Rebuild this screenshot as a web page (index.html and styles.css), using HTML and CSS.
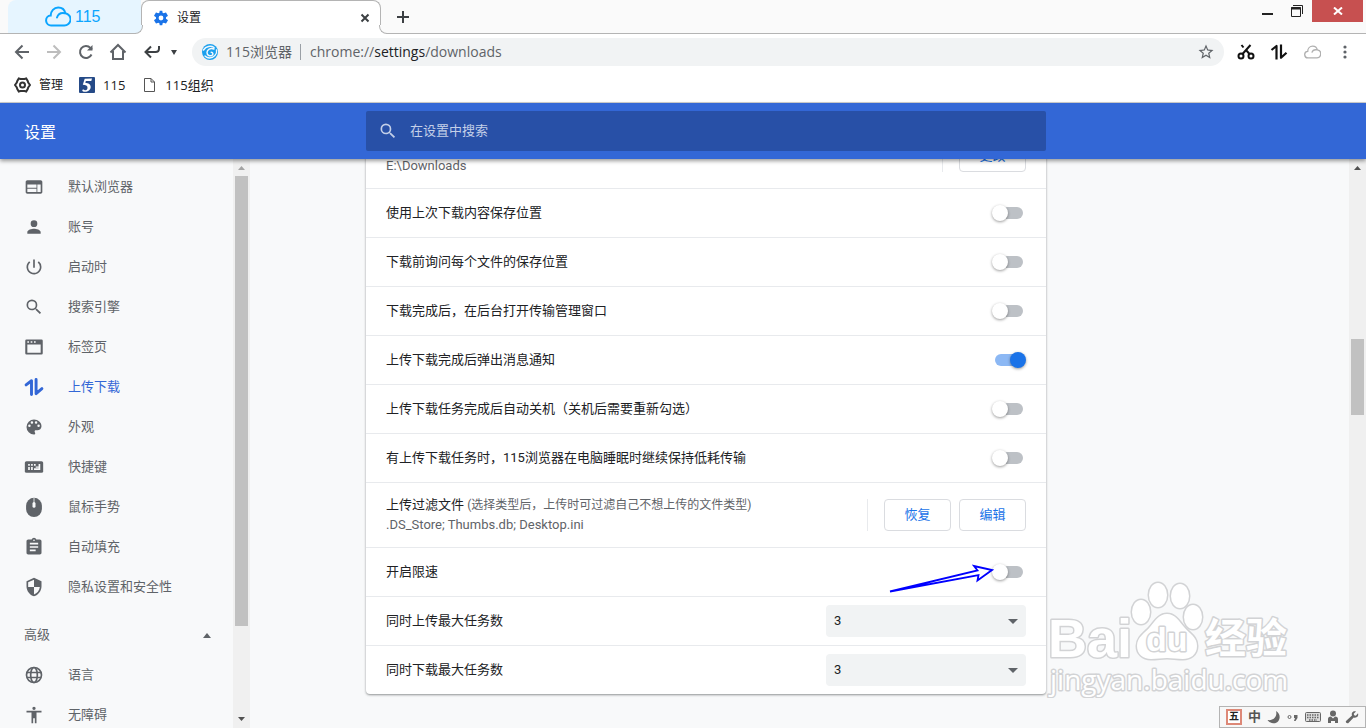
FILE: index.html
```html
<!DOCTYPE html>
<html lang="zh-CN">
<head>
    <meta charset="UTF-8">
    <meta name="viewport" content="width=device-width, initial-scale=1.0">
    <title>设置</title>
    <link rel="stylesheet" href="styles.css">
</head>
<body>
    <!-- Tabs -->
    <div class="tab-strip">
        <a class="home-tab" href="#">
            <svg width="26" height="21" viewBox="0 0 26 21" fill="none" stroke="#0ba5ff" stroke-width="2" stroke-linecap="round"><path d="M6.5 19.5a5 5 0 0 1-.8-10C5.700 5 9 1.500 13.200 1.500c3.600 0 6.400 2.400 7.200 5.700a6.200 6.200 0 0 1-1.400 12.300H6.500zM12 11.500c1-3 3.800-4.900 7.500-4.300"/></svg>
            <span>115</span>
        </a>
        <div class="tab">
            <svg width="16" height="16" viewBox="0 0 24 24" fill="#1a73e8"><path d="M19.430 12.980c.040-.320.070-.640.070-.980s-.030-.660-.070-.980l2.700-2.100c.200-.200.200-.400.100-.600l-2.500-4.300c-.100-.200-.400-.300-.600-.200l-3.100 1.200c-.500-.400-1-.700-1.700-1L14 1.400c0-.200-.300-.400-.500-.400h-3c-.200 0-.500.200-.500.400l-.400 2.600c-.600.300-1.200.600-1.700 1l-3.100-1.200c-.200-.100-.500 0-.600.200L1.700 8.300c-.100.200-.100.500.100.600l2.700 2.100a8 8 0 0 0 0 2l-2.700 2.100c-.200.100-.200.400-.100.600l2.500 4.300c.100.200.400.300.600.200L7.900 19c.500.400 1.100.700 1.700 1l.4 2.600c0 .2.300.4.500.4h3c.2 0 .5-.2.500-.4l.4-2.600c.6-.3 1.200-.6 1.700-1l3.100 1.200c.2.100.5 0 .6-.2l2.500-4.300c.1-.2.1-.5-.1-.6zM12 15.600a3.600 3.600 0 1 1 0-7.200 3.600 3.600 0 0 1 0 7.200z"/></svg>
            <span class="tab-title">设置</span>
            <button class="tab-close" aria-label="关闭标签页"><svg width="10" height="10" viewBox="0 0 10 10" stroke="#3c4043" stroke-width="2"><path d="M1.500 1.500l7 7M8.500 1.500l-7 7"/></svg></button>
        </div>
        <button class="new-tab" aria-label="新标签页"><svg width="12" height="12" viewBox="0 0 12 12" stroke="#3c4043" stroke-width="2"><path d="M6 0v12M0 6h12"/></svg></button>
        <div class="window-controls">
            <button class="win-btn" aria-label="最小化"><svg width="12" height="12" viewBox="0 0 12 12"><path d="M1 8h11v2H1z" fill="#222"/></svg></button>
            <button class="win-btn" aria-label="还原"><svg width="12" height="12" viewBox="0 0 12 12" fill="none" stroke="#222"><path d="M2 .5h9.500V9M.5 2.500h9v9h-9z"/><path d="M0 3.500h10" stroke-width="2"/></svg></button>
            <button class="win-btn win-close" aria-label="关闭"><svg width="10" height="8" viewBox="0 0 10 8" stroke="#fff" stroke-width="2"><path d="M1 .5l8 7M9 .5l-8 7"/></svg></button>
        </div>
    </div>

    <!-- Address bar -->
    <div class="toolbar">
        <button class="tool" aria-label="后退"><svg width="16" height="16" viewBox="0 0 16 16" fill="none" stroke="#5f6368" stroke-width="2"><path d="M15 8H2.500M8.500 1.500L2 8l6.500 6.500"/></svg></button>
        <button class="tool" aria-label="前进"><svg width="16" height="16" viewBox="0 0 16 16" fill="none" stroke="#bdbdbd" stroke-width="2"><path d="M1 8h12.500M7.500 1.500L14 8l-6.500 6.500"/></svg></button>
        <button class="tool" aria-label="重新加载"><svg width="16" height="16" viewBox="0 0 16 16" fill="none" stroke="#5f6368" stroke-width="2"><path d="M13.500 10.500A6 6 0 1 1 12.400 3.900L14 5.500"/><path d="M14.500 1v5.500H9z" fill="#5f6368" stroke="none"/></svg></button>
        <button class="tool" aria-label="主页"><svg width="18" height="18" viewBox="0 0 18 18" fill="none" stroke="#5f6368" stroke-width="2"><path d="M1.500 9.500L9 2l7.500 7.500M4 8v8h10V8"/></svg></button>
        <button class="tool tool-undo" aria-label="恢复"><svg width="18" height="16" viewBox="0 0 18 16" fill="none" stroke="#3c4043" stroke-width="2"><path d="M16 2v2.500c0 2-1.500 3.500-3.500 3.500H2.500M8 2.500L2.500 8 8 13.500"/></svg></button>
        <button class="tool tool-more" aria-label="更多"><svg width="6" height="5" viewBox="0 0 6 5"><path d="M0 0h6L3 5z" fill="#3c4043"/></svg></button>
        <div class="omnibox">
            <svg width="16" height="16" viewBox="0 0 16 16" fill="none"><circle cx="8" cy="8" r="8" fill="#1ba0ee"/><path d="M1.500 6C4 2 9 1.300 12 3.500M12 5C8.500 3.500 5 5.500 5 8.500s3 4 5 2.800c1.500-1 1-3-.8-3" stroke="#f1f8fd" stroke-width="1.500" stroke-linecap="round"/><path d="M14.500 6c1 4-3 8-7 8-2 0-3.500-1-4.500-2" stroke="#f1f8fd" stroke-width="1.300" stroke-linecap="round"/></svg>
            <span class="site-name">115浏览器</span>
            <span class="url">chrome://<b>settings</b>/downloads</span>
            <button class="star" aria-label="收藏"><svg width="18" height="18" viewBox="0 0 24 24" fill="#5f6368"><path d="M22 9.240l-7.190-.620L12 2 9.190 8.630 2 9.240l5.460 4.730L5.820 21 12 17.270 18.180 21l-1.630-7.030L22 9.240zM12 15.400l-3.760 2.270 1-4.280-3.320-2.880 4.380-.380L12 6.100l1.710 4.040 4.380.380-3.320 2.880 1 4.280L12 15.400z"/></svg></button>
        </div>
        <div class="actions">
            <button class="tool" aria-label="截图"><svg width="18" height="18" viewBox="0 0 18 18" fill="none" stroke="#111" stroke-width="2"><circle cx="4" cy="13" r="2.500"/><circle cx="14" cy="13" r="2.500"/><path d="M5.500 11L13.500 2M12.500 11L9 7M6.500 4.500L4.500 2"/></svg></button>
            <button class="tool" aria-label="传输"><svg width="18" height="16" viewBox="0 0 18 16" fill="none" stroke="#111" stroke-width="2.200" stroke-linejoin="round"><path d="M1.500 6L6.500 2v13.500M11 .5v13.300l5.500-5"/></svg></button>
            <button class="tool" aria-label="云"><svg width="17" height="14" viewBox="0 0 26 21" fill="none" stroke="#b0b0b0" stroke-width="2"><path d="M6.500 19.500a5 5 0 0 1-.8-10C5.700 5 9 1.500 13.200 1.500c3.600 0 6.400 2.400 7.200 5.700a6.200 6.200 0 0 1-1.400 12.300H6.500zM12 11.500c1-3 3.800-4.900 7.500-4.300"/></svg></button>
            <button class="tool" aria-label="菜单"><svg width="4" height="14" viewBox="0 0 4 14" fill="#5f6368"><circle cx="2" cy="2" r="1.600"/><circle cx="2" cy="7" r="1.600"/><circle cx="2" cy="12" r="1.600"/></svg></button>
        </div>
    </div>

    <!-- Bookmarks -->
    <div class="bookmarks">
        <a class="bookmark bookmark-manage" href="#">
            <svg width="17" height="16" viewBox="0 0 17 16" fill="none" stroke="#333" stroke-width="2"><path d="M4.800 1.500L6.500 2h4l1.700-.500 1.500 2.500.5 1.500L16 8l-1.800 2.500-.5 1.500-1.500 2.500-1.700-.500h-4l-1.700.500L3.300 12l-.5-1.500L1 8l1.800-2.500.5-1.500z"/><circle cx="8.500" cy="8" r="2.500"/></svg>
            <span>管理</span>
        </a>
        <a class="bookmark" href="#">
            <svg width="16" height="16" viewBox="0 0 16 16"><rect width="16" height="16" rx="1" fill="#254a87"/><path d="M13 1.500L12.300 4H6.800l-.4 2c3 0 5.300 1.200 5.300 4 0 3-2.800 4.800-5.700 4.800-1.500 0-2.700-.500-2.700-1.400 0-.8 1-1.200 1.700-.7 2 1.300 3.500.1 3.500-2 0-2.300-1.700-3-4.700-3L5.700 1.800z" fill="#fff"/></svg>
            <span>115</span>
        </a>
        <a class="bookmark" href="#">
            <svg width="16" height="14" viewBox="0 0 16 14" fill="none" stroke="#555"><path d="M3.500.5H10L13.500 4v9.500h-10zM10 .5V4h3.500"/></svg>
            <span>115组织</span>
        </a>
    </div>

    <header class="header">
        <h1>设置</h1>
        <label class="search">
            <svg width="20" height="20" viewBox="0 0 24 24" fill="#c3cfe8"><path d="M15.500 14h-.790l-.280-.270A6.470 6.470 0 0 0 16 9.500 6.500 6.500 0 1 0 9.500 16c1.610 0 3.090-.590 4.230-1.570l.270.280v.790l5 4.990L20.490 19l-4.990-5zm-6 0a4.500 4.500 0 1 1 0-9 4.500 4.500 0 0 1 0 9z"/></svg>
            <input type="text" placeholder="在设置中搜索" aria-label="在设置中搜索">
        </label>
    </header>

    <div class="page">
        <nav class="sidebar">
            <div class="menu">
                <a class="item" href="#"><svg viewBox="0 0 24 24"><path d="M20 4H4c-1.100 0-2 .9-2 2v12c0 1.100.9 2 2 2h16c1.100 0 2-.9 2-2V6c0-1.100-.9-2-2-2zm-5 14H4v-4h11v4zm0-5H4V9h11v4zm5 5h-4V9h4v9z"/></svg>默认浏览器</a>
                <a class="item" href="#"><svg viewBox="0 0 24 24"><path d="M12 12a4 4 0 1 0 0-8 4 4 0 0 0 0 8zm0 2c-2.670 0-8 1.340-8 4v2h16v-2c0-2.660-5.330-4-8-4z"/></svg>账号</a>
                <a class="item" href="#"><svg viewBox="0 0 24 24"><path d="M13 3h-2v10h2V3zm4.830 2.170l-1.420 1.420A6.920 6.920 0 0 1 19 12a7 7 0 1 1-11.420-5.420L6.170 5.170A9 9 0 1 0 21 12a8.900 8.900 0 0 0-3.170-6.830z"/></svg>启动时</a>
                <a class="item" href="#"><svg viewBox="0 0 24 24"><path d="M15.500 14h-.790l-.280-.270A6.470 6.470 0 0 0 16 9.500 6.500 6.500 0 1 0 9.500 16c1.610 0 3.090-.590 4.230-1.570l.270.280v.790l5 4.990L20.490 19l-4.990-5zm-6 0a4.500 4.500 0 1 1 0-9 4.500 4.500 0 0 1 0 9z"/></svg>搜索引擎</a>
                <a class="item" href="#"><svg viewBox="0 0 24 24"><path d="M3 3h18q1.500 0 1.500 1.500v15q0 1.500-1.500 1.500H3q-1.500 0-1.500-1.500v-15Q1.500 3 3 3zm1 6v10h16V9zm0-3.800v1.800h2V5.200zm4 0v1.800h2V5.200zm4 0v1.800h2V5.200z" fill-rule="evenodd"/></svg>标签页</a>
                <a class="item active" href="#"><svg viewBox="0 0 24 24"><path d="M2.500 9.500L9 4.500V21M14.500 3v17l7-6" fill="none" stroke="#3367d6" stroke-width="3.500" stroke-linecap="round" stroke-linejoin="round"/></svg>上传下载</a>
                <a class="item" href="#"><svg viewBox="0 0 24 24"><path d="M12 3a9 9 0 0 0 0 18c.830 0 1.500-.670 1.500-1.500 0-.390-.150-.740-.390-1.010-.230-.260-.380-.610-.380-.990 0-.830.670-1.500 1.500-1.500H16c2.760 0 5-2.240 5-5 0-4.420-4.030-8-9-8zm-5.500 9a1.500 1.500 0 1 1 0-3 1.500 1.500 0 0 1 0 3zm3-4a1.500 1.500 0 1 1 0-3 1.500 1.500 0 0 1 0 3zm5 0a1.500 1.500 0 1 1 0-3 1.500 1.500 0 0 1 0 3zm3 4a1.500 1.500 0 1 1 0-3 1.500 1.500 0 0 1 0 3z"/></svg>外观</a>
                <a class="item" href="#"><svg viewBox="0 0 24 24"><path d="M3 5h18q2 0 2 2v10q0 2-2 2H3q-2 0-2-2V7q0-2 2-2z"/><path d="M5 8.500h2v2H5zM8.500 8.500h2v2h-2zM12 8.500h2v2h-2zM5 12h2v3.500H5zM8.500 12h2v3.500h-2zM12 13.500h7.500v2H12zM17.500 8.500h2v6h-2zM14 11.500h3.500v1.500H14z" fill="#f8f9fa"/></svg>快捷键</a>
                <a class="item" href="#"><svg viewBox="0 0 24 24"><rect x="2.500" y="1" width="19" height="23" rx="9.500"/><path d="M12 1v6" stroke="#f8f9fa"/><rect x="10.200" y="6" width="3.600" height="7" rx="1.800" fill="#f8f9fa"/></svg>鼠标手势</a>
                <a class="item" href="#"><svg viewBox="0 0 24 24"><path d="M19 3h-4.180a3 3 0 0 0-5.640 0H5c-1.100 0-2 .9-2 2v14c0 1.100.9 2 2 2h14c1.100 0 2-.9 2-2V5c0-1.100-.9-2-2-2zm-7 0a1 1 0 1 1 0 2 1 1 0 0 1 0-2zm2 14H7v-2h7v2zm3-4H7v-2h10v2zm0-4H7V7h10v2z"/></svg>自动填充</a>
                <a class="item" href="#"><svg viewBox="0 0 24 24"><path d="M12 1L3 5v6c0 5.550 3.840 10.740 9 12 5.160-1.260 9-6.450 9-12V5l-9-4zm0 10.990h7c-.530 4.120-3.280 7.790-7 8.940V12H5V6.300l7-3.110v8.800z"/></svg>隐私设置和安全性</a>
                <button class="advanced">高级<svg width="8" height="5" viewBox="0 0 8 5"><path d="M0 5l4-5 4 5z" fill="#5f6368"/></svg></button>
                <a class="item" href="#"><svg viewBox="0 0 24 24" stroke="#5f6368" stroke-width="2"><g fill="none"><circle cx="12" cy="12" r="9"/><ellipse cx="12" cy="12" rx="4" ry="9"/><path d="M3.500 9h17M3.500 15h17"/></g></svg>语言</a>
                <a class="item" href="#"><svg viewBox="0 0 24 24"><path d="M12 2a2 2 0 1 1 0 4 2 2 0 0 1 0-4zm9 7h-6v13h-2v-6h-2v6H9V9H3V7h18v2z"/></svg>无障碍</a>
            </div>
            <div class="scrollbar" aria-hidden="true">
                <svg viewBox="0 0 17 17"><path d="M5 11h7L8.500 7z" fill="#a3a3a3"/></svg>
                <div class="thumb thumb-menu"></div>
                <svg class="scroll-down" viewBox="0 0 17 17"><path d="M5 6h7l-3.500 4z" fill="#505050"/></svg>
            </div>
        </nav>

        <main class="content">
            <div class="card">
                <div class="row row-tall row-path">
                    <div class="text"><span class="sub">E:\Downloads</span></div>
                    <div class="buttons"><button class="btn">更改</button></div>
                </div>
                <label class="row"><span>使用上次下载内容保存位置</span><input class="toggle" type="checkbox"></label>
                <label class="row"><span>下载前询问每个文件的保存位置</span><input class="toggle" type="checkbox"></label>
                <label class="row"><span>下载完成后，在后台打开传输管理窗口</span><input class="toggle" type="checkbox"></label>
                <label class="row"><span>上传下载完成后弹出消息通知</span><input class="toggle" type="checkbox" checked></label>
                <label class="row"><span>上传下载任务完成后自动关机（关机后需要重新勾选）</span><input class="toggle" type="checkbox"></label>
                <label class="row"><span>有上传下载任务时，115浏览器在电脑睡眠时继续保持低耗传输</span><input class="toggle" type="checkbox"></label>
                <div class="row row-tall">
                    <div class="text">
                        <span>上传过滤文件 <small>(选择类型后，上传时可过滤自己不想上传的文件类型)</small></span>
                        <span class="sub">.DS_Store; Thumbs.db; Desktop.ini</span>
                    </div>
                    <div class="buttons">
                        <button class="btn">恢复</button>
                        <button class="btn">编辑</button>
                    </div>
                </div>
                <label class="row">
                    <span>开启限速</span><input class="toggle" type="checkbox">
                    <svg class="pointer" width="106" height="30" viewBox="0 0 106 30" fill="none" stroke="#00f" stroke-width="1.800"><path d="M2 28.500L89.500 7.500 86 3l18 4-14.500 10.500 1-5.500z"/></svg>
                </label>
                <div class="row">
                    <label for="upload-max">同时上传最大任务数</label>
                    <div class="select"><select id="upload-max"><option>3</option></select><svg width="10" height="5" viewBox="0 0 10 5"><path d="M0 0h10L5 5z" fill="#5f6368"/></svg></div>
                </div>
                <div class="row">
                    <label for="download-max">同时下载最大任务数</label>
                    <div class="select"><select id="download-max"><option>3</option></select><svg width="10" height="5" viewBox="0 0 10 5"><path d="M0 0h10L5 5z" fill="#5f6368"/></svg></div>
                </div>
            </div>
        </main>

        <div class="scrollbar" aria-hidden="true">
            <svg viewBox="0 0 17 17"><path d="M5 11h7L8.500 7z" fill="#505050"/></svg>
            <div class="thumb thumb-page"></div>
        </div>
    </div>

    <svg class="watermark" width="260" height="120" viewBox="0 0 260 120">
        <g fill="#fff" stroke="#d2d3d5" stroke-width="3" paint-order="stroke" stroke-linejoin="round">
            <text class="wm-latin" x="8" y="79" font-size="54">Bai</text>
            <ellipse cx="101" cy="34" rx="9" ry="12"/>
            <ellipse cx="118" cy="17" rx="9" ry="12"/>
            <ellipse cx="140" cy="18" rx="9" ry="12"/>
            <ellipse cx="153" cy="39" rx="9" ry="12"/>
            <path d="M127 36c8 0 12 7 17 13 6 7 13 10 13 19 0 9-7 13-14 13-6 0-11-1-16-1s-10 1-16 1c-8 0-14-5-14-13 0-9 8-13 13-19 5-6 9-13 17-13z"/>
            <text class="wm-latin" x="106" y="73" font-size="34">du</text>
            <text class="wm-cjk" x="165" y="75" font-size="41">经验</text>
            <text class="wm-site" x="10" y="112" font-size="28">jingyan.baidu.com</text>
        </g>
    </svg>

    <div class="ime">
        <span class="ime-mode">五</span>
        <span class="ime-lang">中</span>
        <svg width="14" height="14" viewBox="0 0 14 14"><path d="M9 1c7 4 3 14-4 12-2-.5-3.500-1.500-4.500-3C7 11 10.500 6 9 1z" fill="#666"/></svg>
        <svg width="12" height="14" viewBox="0 0 12 14" fill="#666"><circle cx="2.500" cy="7" r="1.500" fill="none" stroke="#666"/><path d="M7 5h3.500v3L8.500 11H7l1-3H7z"/></svg>
        <svg width="16" height="14" viewBox="0 0 16 14"><rect x=".5" y="2.500" width="15" height="9" rx="1" fill="#ddd" stroke="#666"/><path d="M2 5h12M2 7.500h12M4 10h8" stroke="#666" stroke-width="1.500" stroke-dasharray="1.500 1"/></svg>
        <svg width="12" height="14" viewBox="0 0 12 14" fill="#666"><circle cx="6" cy="3.500" r="3"/><path d="M1 13V9q0-2.500 3-2.500l2 2 2-2q3 0 3 2.500v4H8v-2H4v2z"/></svg>
        <svg width="14" height="14" viewBox="0 0 14 14"><path d="M1 11l6-5.500C6 2.500 8.500.5 11 1.500L8.700 3.800l.5 1.500 1.600.4L13 3.300c1 3-1.500 5-4.300 4.200L3.200 13.200c-1.500.5-3-1-2.200-2.200z" fill="#666"/></svg>
    </div>
</body>
</html>
```
FILE: styles.css
```css
* {
    box-sizing: border-box;
}

body {
    margin: 0;
    height: 100vh;
    display: flex;
    flex-direction: column;
    overflow: hidden;
    position: relative;
    background-color: #f8f9fa;
    color: #202124;
    font-family: Roboto, "Noto Sans CJK SC", sans-serif;
    font-size: 13px;
    line-height: 20px;
}

button {
    font: inherit;
    border: none;
    background: none;
    padding: 0;
    margin: 0;
    display: flex;
    align-items: center;
    justify-content: center;
    cursor: pointer;
}

a {
    color: inherit;
    text-decoration: none;
}

svg {
    flex-shrink: 0;
}

/* tabs */
.tab-strip {
    display: flex;
    height: 34px;
    padding-left: 8px;
    background-color: #fafafa;
    border-bottom: 1px solid #b4b4b4;
}

.home-tab {
    display: flex;
    align-items: center;
    gap: 4px;
    width: 133px;
    padding-left: 37px;
    background-color: #e6f5ff;
    border-radius: 8px 0 0 0;
    color: #0ba5ff;
    font-family: "Liberation Sans", sans-serif;
    font-size: 16px;
}

.tab {
    position: relative;
    display: flex;
    align-items: center;
    width: 240px;
    height: 34px;
    padding: 0 10px 0 11px;
    background-color: #fff;
    border: 1px solid #b4b4b4;
    border-bottom: none;
    border-radius: 8px 8px 0 0;
    font-size: 12px;
}

/* rounded feet of the open tab */
.tab::before,
.tab::after {
    content: "";
    position: absolute;
    bottom: 0;
    width: 8px;
    height: 8px;
    border-bottom: 1px solid #b4b4b4;
}

.tab::before {
    left: -8px;
    border-right: 1px solid #b4b4b4;
    border-bottom-right-radius: 8px;
    background-color: #e6f5ff;
    box-shadow: 2px 2px 0 #fff;
}

.tab::after {
    right: -8px;
    border-left: 1px solid #b4b4b4;
    border-bottom-left-radius: 8px;
    background-color: #fafafa;
    box-shadow: -2px 2px 0 #fff;
}

.tab-title {
    flex: 1;
    margin-left: 8px;
}

.new-tab {
    width: 44px;
}

.window-controls {
    display: flex;
    margin-left: auto;
    padding-right: 3px;
}

.win-btn {
    width: 30px;
    height: 22px;
}

.win-close {
    width: 51px;
    background-color: #c75050;
}

/* address bar */
.toolbar {
    display: flex;
    align-items: center;
    height: 36px;
    padding: 0 5px 0 6px;
    background-color: #fff;
}

.tool {
    width: 32px;
    height: 28px;
}

.tool-undo {
    width: 36px;
}

.tool-more {
    width: 8px;
}

.omnibox {
    display: flex;
    align-items: center;
    flex: 1;
    height: 28px;
    margin-left: 14px;
    padding: 0 9px 0 10px;
    border-radius: 14px;
    background-color: #f1f3f4;
    color: #5f6368;
    font-family: "Open Sans", "Noto Sans CJK SC", sans-serif;
    font-size: 14px;
}

.site-name {
    margin-left: 8px;
    padding-right: 8px;
    border-right: 1px solid #9aa0a6;
    line-height: 16px;
}

.url {
    flex: 1;
    margin-left: 9px;
}

.url b {
    color: #202124;
    font-weight: normal;
}

.actions {
    display: flex;
    gap: 1px;
    margin-left: 6px;
}

/* bookmarks */
.bookmarks {
    display: flex;
    align-items: center;
    gap: 16px;
    height: 33px;
    padding: 0 14px 3px;
    background-color: #fff;
    border-bottom: 1px solid #d0d0d0;
    font-family: "Open Sans", "Noto Sans CJK SC", sans-serif;
}

.bookmark {
    display: flex;
    align-items: center;
    gap: 8px;
}

.bookmark-manage {
    font-size: 12px;
}

/* settings header */
.header {
    position: relative;
    z-index: 1;
    display: flex;
    align-items: center;
    height: 56px;
    background-color: #3367d6;
    box-shadow: 0 2px 4px rgba(0, 0, 0, 0.4);
}

h1 {
    width: 366px;
    margin: 0;
    padding: 3px 0 0 24px;
    color: #fff;
    font-size: 16px;
    font-weight: normal;
}

.search {
    display: flex;
    align-items: center;
    flex: 0 1 680px;
    height: 40px;
    padding-left: 12px;
    border-radius: 2px;
    background-color: #2850a7;
}

.search input {
    flex: 1;
    margin-left: 12px;
    padding: 0;
    border: none;
    outline: none;
    background: none;
    color: #fff;
    font: inherit;
}

.search input::placeholder {
    color: #c3cfe8;
}

.page {
    display: flex;
    flex: 1;
    min-height: 0;
}

/* side menu */
.sidebar {
    display: flex;
    width: 250px;
    color: #5f6368;
}

.menu {
    flex: 1;
    padding-top: 8px;
    overflow: hidden;
}

.item {
    display: flex;
    align-items: center;
    gap: 24px;
    height: 40px;
    padding-left: 24px;
}

.item svg {
    width: 20px;
    height: 20px;
    fill: #5f6368;
}

.active {
    color: #3367d6;
}

.advanced {
    justify-content: space-between;
    width: 100%;
    height: 40px;
    margin-top: 8px;
    padding: 0 22px 0 24px;
    color: #5f6368;
}

.scrollbar {
    display: flex;
    flex-direction: column;
    width: 17px;
    background-color: #f0f0f0;
}

.scrollbar svg {
    width: 17px;
    height: 17px;
}

.scroll-down {
    margin-top: auto;
}

.thumb {
    margin: 0 2px;
    background-color: #c1c1c1;
}

.thumb-menu {
    height: 79%;
}

.thumb-page {
    height: 76px;
    margin-top: 163px;
}

/* settings card */
.content {
    flex: 1;
    padding-left: 116px;
    overflow: hidden;
}

.card {
    max-width: 680px;
    margin-top: -35px; /* scrolled under the header */
    background-color: #fff;
    border-radius: 4px;
    box-shadow: 0 1px 2px rgba(60, 64, 67, 0.4), 0 1px 3px rgba(60, 64, 67, 0.2);
}

.row {
    position: relative;
    display: flex;
    align-items: center;
    justify-content: space-between;
    min-height: 49px;
    padding: 0 20px;
    border-top: 1px solid #e8eaed;
}

.row-tall {
    min-height: 65px;
}

.row-path {
    min-height: 64px;
    border-top: none;
}

.row-path .text {
    align-self: flex-end;
    padding-bottom: 12px;
}

.text {
    display: flex;
    flex-direction: column;
}

.text small {
    color: #5f6368;
    font-size: 12px;
}

.sub {
    color: #5f6368;
}

.buttons {
    display: flex;
    gap: 8px;
    padding-left: 16px;
    border-left: 1px solid #e8eaed;
}

.btn {
    min-width: 67px;
    height: 32px;
    padding: 0 16px;
    border: 1px solid #dadce0;
    border-radius: 4px;
    color: #1a73e8;
}

.toggle {
    appearance: none;
    position: relative;
    width: 34px;
    height: 16px;
    margin: 0;
    cursor: pointer;
}

.toggle::before {
    content: "";
    position: absolute;
    top: 2px;
    left: 3px;
    width: 28px;
    height: 12px;
    border-radius: 6px;
    background-color: #bdc1c6;
}

.toggle::after {
    content: "";
    position: absolute;
    top: 0;
    left: 0;
    width: 16px;
    height: 16px;
    border-radius: 50%;
    background-color: #fff;
    box-shadow: 0 1px 3px rgba(0, 0, 0, 0.4);
}

.toggle:checked::before {
    background-color: #8cb8f4;
}

.toggle:checked::after {
    left: 18px;
    background-color: #1a73e8;
}

.pointer {
    position: absolute;
    right: 52px;
    top: 15px;
}

.select {
    position: relative;
}

.select select {
    appearance: none;
    width: 200px;
    height: 32px;
    padding: 0 8px;
    border: none;
    border-radius: 4px;
    background-color: #f1f3f4;
    color: #202124;
    font: inherit;
}

.select svg {
    position: absolute;
    top: 14px;
    right: 8px;
    pointer-events: none;
}

/* overlays */
.watermark {
    position: absolute;
    right: 66px;
    bottom: 30px;
    pointer-events: none;
}

.wm-latin {
    font-family: "Liberation Sans", sans-serif;
    font-weight: bold;
}

.wm-cjk {
    font-family: "Noto Sans CJK SC", sans-serif;
    font-weight: bold;
}

.wm-site {
    font-family: "Open Sans", sans-serif;
}

.ime {
    position: absolute;
    z-index: 2;
    right: 0;
    bottom: 0;
    display: flex;
    align-items: center;
    gap: 6px;
    height: 22px;
    padding: 0 6px;
    border: 1px solid #b4b4b4;
    background-color: #f7f7f7;
}

.ime-mode {
    width: 16px;
    border: 2px solid #dd8877;
    background-color: #fff;
    color: #222;
    font-size: 10px;
    font-weight: bold;
    line-height: 12px;
    text-align: center;
}

.ime-lang {
    color: #555;
    font-weight: bold;
}
```
